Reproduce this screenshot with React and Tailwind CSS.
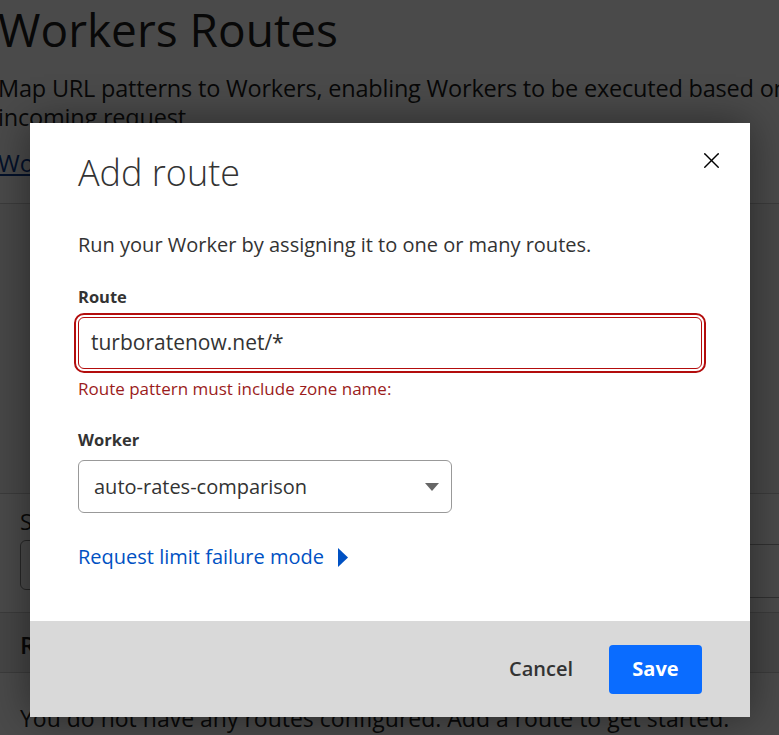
import { X } from 'lucide-react';

const font = { fontFamily: '"Open Sans", "Noto Sans", sans-serif' };

function BackgroundPage() {
  return (
    <div className="w-[860px] bg-white text-[#1d1d1d]">
      <div className="pt-[1px] h-[203px]">
        <h1 className="text-[46px] leading-[56px] -ml-[2px] font-normal">Workers Routes</h1>
        <p className="text-[23.5px] leading-[29px] mt-[17px] -ml-[2px] whitespace-nowrap tracking-[-0.2px]">
          Map URL patterns to Workers, enabling Workers to be executed based on the
          <br />
          incoming request.
        </p>
        <a className="block text-[23.5px] leading-[29px] mt-[17px] text-[#0b3d91] underline w-max -ml-[2px]">Workers Routes documentation</a>
      </div>
      <div className="border-t border-[#d0d0d0] h-[290px] bg-[#f7f7f7] px-[20px] pt-[104px]">
        <p className="text-right text-[22px] pr-[94px] text-[#1d1d1d]">your Workers from HTTP services,</p>
      </div>
      <div className="border-t border-[#d0d0d0] bg-white px-[20px] pt-[12px] h-[119px] flex gap-[40px]">
        <div>
          <p className="text-[22px] leading-[30px]">Select zone</p>
          <div className="mt-[4px] h-[50px] w-[300px] border border-[#888] rounded-[6px]" />
        </div>
        <div className="mt-[38px] h-[54px] w-[440px] border-y border-[#aaa]" />
      </div>
      <div className="border-t border-[#d0d0d0] bg-[#f2f2f2] px-[20px] pt-[14px] h-[60px]">
        <p className="text-[24px] font-semibold">Routes</p>
      </div>
      <div className="border-t border-[#d0d0d0] bg-white px-[20px] pt-[28px] h-[200px]">
        <p className="text-[23px]">You do not have any routes configured. Add a route to get started.</p>
      </div>
    </div>
  );
}

export default function App() {
  return (
    <div className="relative w-[779px] h-[735px] overflow-hidden" style={font}>
      <BackgroundPage />
      <div className="absolute inset-0 bg-black/[0.71]" />
      <div className="absolute left-[30px] top-[123px] w-[720px] bg-white shadow-[0_0_40px_rgba(0,0,0,0.45)]">
        <div className="relative px-[48px] pt-[29px] pb-[50px]">
          <button className="absolute right-[25px] top-[24px] text-black">
            <X size={27} strokeWidth={1.3} />
          </button>
          <h2 className="text-[36px] leading-[42px] font-light text-[#333]">Add route</h2>
          <p className="mt-[38px] text-[20px] leading-[26px] text-[#333]">
            Run your Worker by assigning it to one or many routes.
          </p>
          <label className="block mt-[28px] text-[16.5px] leading-[22px] font-bold text-[#333]">Route</label>
          <div className="mt-[9px] h-[52px] border border-[#b30d0d] rounded-[6px] outline-2 outline-[#b30d0d] outline-offset-2 flex items-center px-[12px]">
            <span className="text-[21px] text-[#333]">turboratenow.net/*</span>
          </div>
          <p className="mt-[9px] text-[17px] leading-[22px] text-[#9b1c1c]">Route pattern must include zone name:</p>
          <label className="block mt-[29px] text-[16.5px] leading-[22px] font-bold text-[#333]">Worker</label>
          <div className="mt-[9px] h-[53px] w-[374px] border border-[#999] rounded-[6px] flex items-center justify-between pl-[15px] pr-[12px]">
            <span className="text-[20px] text-[#333]">auto-rates-comparison</span>
            <svg width="14" height="8" viewBox="0 0 14 8">
              <path d="M0 0h14L7 8z" fill="#666" />
            </svg>
          </div>
          <div className="mt-[30px] flex items-center gap-[14px] text-[#0051c3]">
            <span className="text-[20px] leading-[28px]">Request limit failure mode</span>
            <svg width="10" height="19" viewBox="0 0 10 19">
              <path d="M0 0l10 9.5L0 19z" fill="#0051c3" />
            </svg>
          </div>
        </div>
        <div className="bg-[#d9d9d9] h-[96px] flex items-center justify-end pr-[48px] gap-[36px]">
          <button className="text-[20px] font-semibold text-[#333]">Cancel</button>
          <button className="h-[49px] w-[93px] rounded-[4px] bg-[#0a6cff] text-white text-[20px] font-bold">Save</button>
        </div>
      </div>
    </div>
  );
}
